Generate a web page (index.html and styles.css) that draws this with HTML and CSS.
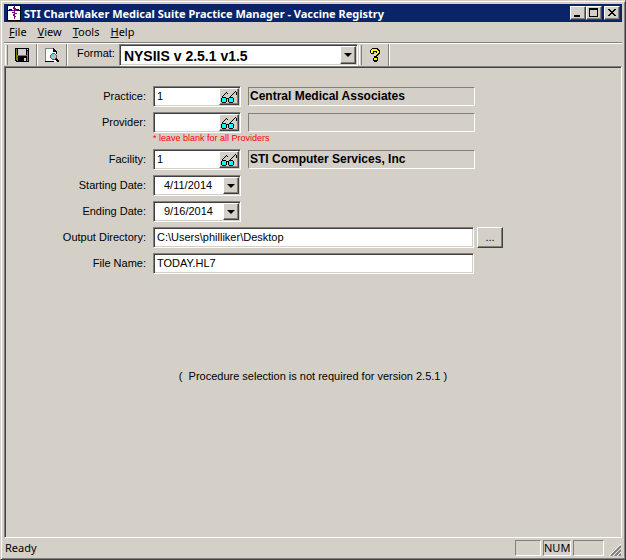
FILE: index.html
```html
<!DOCTYPE html>
<html lang="en">
<head>
    <meta charset="UTF-8">
    <meta name="viewport" content="width=device-width, initial-scale=1.0">
    <title>Vaccine Registry</title>
    <link rel="stylesheet" href="styles.css">
</head>
<body>
    <div class="window">
        <header class="title-bar">
            <svg class="app-icon" viewBox="0 0 14 16" shape-rendering="crispEdges">
                <rect width="14" height="16" fill="#000"/>
                <rect x="1" y="1" width="12" height="14" fill="#fff"/>
                <path d="M2 4h3v1h-3zM9 4h3v1h-3zM1 5h12v1h-12z" fill="#000080"/>
                <path d="M7 1h1v13h-1zM6 2h1v2h-1zM8 3h1v2h-1zM5 7h2v1h-2zM8 8h2v1h-2zM6 9h1v2h-1zM8 11h1v1h-1zM5 5h5v1h-5z" fill="#800080"/>
            </svg>
            <h1>STI ChartMaker Medical Suite Practice Manager - Vaccine Registry</h1>
            <div class="window-buttons">
                <button type="button" class="raised" aria-label="Minimize">
                    <svg viewBox="0 0 12 10" shape-rendering="crispEdges"><path d="M2 7h6v2h-6z"/></svg>
                </button>
                <button type="button" class="raised" aria-label="Maximize">
                    <svg viewBox="0 0 12 10" shape-rendering="crispEdges"><path d="M1 0h9v9h-9zM2 2v6h7v-6z" fill-rule="evenodd"/></svg>
                </button>
                <button type="button" class="raised close" aria-label="Close">
                    <svg viewBox="0 0 12 10" shape-rendering="crispEdges"><path d="M2 1h2v1h1v1h2v-1h1v-1h2v1h-1v1h-1v1h-1v1h1v1h1v1h1v1h-2v-1h-1v-1h-2v1h-1v1h-2v-1h1v-1h1v-1h1v-1h-1v-1h-1v-1h-1z"/></svg>
                </button>
            </div>
        </header>

        <nav class="menu-bar">
            <a href="#"><u>F</u>ile</a>
            <a href="#"><u>V</u>iew</a>
            <a href="#"><u>T</u>ools</a>
            <a href="#"><u>H</u>elp</a>
        </nav>

        <div class="toolbar">
            <span class="gripper"></span>
            <button type="button" class="tool" aria-label="Save">
                <svg width="14" height="14" viewBox="0 0 14 14" shape-rendering="crispEdges">
                    <path d="M0 0h14v14h-13l-1-1z" fill="#000"/>
                    <path d="M1 1h1v11h-1zM2 7h10v1h-10zM12 3h1v10h-1zM2 8h1v5h-1z" fill="#808000"/>
                    <path d="M3 1h8v6h-8zM12 1h1v1h-1zM9 10h2v3h-2z" fill="#d4d0c8"/>
                </svg>
            </button>
            <span class="divider"></span>
            <button type="button" class="tool" aria-label="Preview">
                <svg width="15" height="15" viewBox="0 0 15 15" shape-rendering="crispEdges">
                    <path d="M0 0h8l3 3v11h-11z" fill="#fff"/>
                    <path d="M0 0h8v1h-8zM0 0h1v14h-1z" fill="#808080"/>
                    <path d="M8 0h1v1h1v1h1v1h1v3h-1v-2h-3zM0 13h9v1h-9z" fill="#000"/>
                    <path d="M7 5h3v1h1v1h1v3h-1v1h-1v1h-3v-1h-1v-1h-1v-3h1v-1h1z" fill="#606060"/>
                    <path d="M7 6h3v1h1v3h-1v1h-3v-1h-1v-3h1z" fill="#c0c0c0"/>
                    <path d="M7 6h1v1h1v1h-2v1h-1v-2h1zM9 9h1v1h-1v1h-1v-1h1z" fill="#0ff"/>
                    <path d="M11 10h1v1h1v1h1v2h-2v-1h-1v-1h-1v-1h1z" fill="#000"/>
                </svg>
            </button>
            <span class="divider"></span>
            <label for="format">Format:</label>
            <div class="combo sunken">
                <select id="format">
                    <option>NYSIIS v 2.5.1 v1.5</option>
                </select>
                <span class="arrow raised"></span>
            </div>
            <span class="gripper"></span>
            <button type="button" class="tool help" aria-label="Help">
                <svg width="10" height="14" viewBox="0 0 10 14" shape-rendering="crispEdges">
                    <path d="M2 0h6v1h1v1h1v4h-1v1h-1v1h-1v1h1v4h-1v1h-3v-1h-1v-3h1v-3h1v-1h1v-2h-2v2h-3v-1h-1v-3h1v-1h1z" fill="#000"/>
                    <path d="M2 1h5v1h1v1h1v2h-1v1h-1v1h-1v1h-2v-1h1v-1h1v-1h1v-2h-4v2h-2v-3h1zM4 10h3v2h-3z" fill="#ff0"/>
                </svg>
            </button>
            <span class="divider"></span>
        </div>

        <main class="client">
            <form class="registry">
                <div class="row">
                    <label for="practice">Practice:</label>
                    <div class="field lookup sunken">
                        <input id="practice" type="text" value="1">
                        <button type="button" class="raised" aria-label="Find practice">
                            <svg width="16" height="12" viewBox="0 0 16 12"><use href="#glasses"/></svg>
                        </button>
                    </div>
                    <output class="name">Central Medical Associates</output>
                </div>
                <div class="row">
                    <label for="provider">Provider:</label>
                    <div class="provider">
                        <div class="field lookup sunken">
                            <input id="provider" type="text">
                            <button type="button" class="raised" aria-label="Find provider">
                                <svg width="16" height="12" viewBox="0 0 16 12"><use href="#glasses"/></svg>
                            </button>
                        </div>
                        <p class="note">* leave blank for all Providers</p>
                    </div>
                    <output class="name"></output>
                </div>
                <div class="row">
                    <label for="facility">Facility:</label>
                    <div class="field lookup sunken">
                        <input id="facility" type="text" value="1">
                        <button type="button" class="raised" aria-label="Find facility">
                            <svg width="16" height="12" viewBox="0 0 16 12"><use href="#glasses"/></svg>
                        </button>
                    </div>
                    <output class="name">STI Computer Services, Inc</output>
                </div>
                <div class="row">
                    <label for="start">Starting Date:</label>
                    <div class="field date sunken">
                        <input id="start" type="text" value="4/11/2014">
                        <button type="button" class="arrow raised" aria-label="Pick starting date"></button>
                    </div>
                </div>
                <div class="row">
                    <label for="end">Ending Date:</label>
                    <div class="field date sunken">
                        <input id="end" type="text" value="9/16/2014">
                        <button type="button" class="arrow raised" aria-label="Pick ending date"></button>
                    </div>
                </div>
                <div class="row">
                    <label for="output-dir">Output Directory:</label>
                    <div class="field wide sunken">
                        <input id="output-dir" type="text" value="C:\Users\philliker\Desktop">
                    </div>
                    <button type="button" class="browse raised" aria-label="Browse">...</button>
                </div>
                <div class="row">
                    <label for="file-name">File Name:</label>
                    <div class="field wide sunken">
                        <input id="file-name" type="text" value="TODAY.HL7">
                    </div>
                </div>
            </form>
            <p class="message">(&nbsp; Procedure selection is not required for version 2.5.1 )</p>
        </main>

        <footer class="status-bar">
            <span class="status-text">Ready</span>
            <span class="pane"></span>
            <span class="pane num">NUM</span>
            <span class="pane last"></span>
            <svg class="grip" width="12" height="12" viewBox="0 0 12 12">
                <path d="M0 12L12 0M4 12L12 4M8 12L12 8" stroke="#fff"/>
                <path d="M2 12L12 2M6 12L12 6M10 12L12 10" stroke="#808080" stroke-width="2"/>
            </svg>
        </footer>
    </div>

    <svg class="symbols" aria-hidden="true">
        <symbol id="glasses" viewBox="0 0 16 12">
            <g shape-rendering="crispEdges">
                <path d="M1 6h4v1h1v4h-1v1h-4v-1h-1v-4h1zM8 6h4v1h1v4h-1v1h-4v-1h-1v-4h1zM6 7h1v1h-1zM1 5h1v1h-1zM2 4h1v1h-1zM3 3h1v1h-1zM4 2h1v1h-1zM5 1h1v1h-1zM6 2h1v1h-1zM9 5h1v1h-1zM10 4h1v1h-1zM11 3h1v1h-1zM12 2h1v1h-1zM13 1h1v1h-1zM14 0h1v1h-1zM15 1h1v3h-1z"/>
                <path d="M1 7h4v4h-4zM8 7h4v4h-4z" fill="#0ff"/>
            </g>
        </symbol>
    </svg>
</body>
</html>
```
FILE: styles.css
```css
* {
    box-sizing: border-box;
}

body {
    margin: 0;
    background: #d4d0c8;
    color: #000;
    font-family: "Liberation Sans", Arial, sans-serif;
    font-size: 11px;
    line-height: 13px;
}

button, input, select {
    font: inherit;
    color: inherit;
    margin: 0;
    padding: 0;
    border: 0;
    border-radius: 0;
    background: none;
    outline: none;
}

svg {
    display: block;
}

.symbols {
    display: none;
}

/* Bevels */
.raised {
    background: #d4d0c8;
    border: 1px solid;
    border-color: #fff #404040 #404040 #fff;
    box-shadow: inset -1px -1px #808080;
}

.sunken {
    background: #fff;
    border: 1px solid;
    border-color: #808080 #fff #fff #808080;
    box-shadow: inset 1px 1px #404040, inset -1px -1px #d4d0c8;
}

.window {
    display: flex;
    flex-direction: column;
    min-height: 100vh;
    padding: 2px;
    border: 1px solid;
    border-color: #d4d0c8 #404040 #404040 #d4d0c8;
    box-shadow: inset 1px 1px #fff, inset -1px -1px #808080;
}

/* Title bar */
.title-bar {
    display: flex;
    align-items: center;
    height: 18px;
    margin: 1px 1px 0;
    padding: 0 2px 0 3px;
    background: #0a246a;
    color: #fff;
}

.app-icon {
    width: 14px;
    height: 16px;
}

.title-bar h1 {
    flex: 1;
    margin: 0 0 0 3px;
    font-family: "Noto Sans", sans-serif;
    font-size: 11px;
    font-weight: bold;
    white-space: nowrap;
}

.window-buttons {
    display: flex;
}

.window-buttons button {
    width: 16px;
    height: 14px;
    padding: 1px;
}

.window-buttons svg {
    width: 12px;
    height: 10px;
}

.window-buttons .close {
    margin-left: 2px;
}

/* Menu */
.menu-bar {
    display: flex;
    gap: 11px;
    height: 21px;
    margin: 0 1px;
    padding: 3px 5px;
    border-bottom: 1px solid #808080;
    font-family: "Noto Sans", sans-serif;
}

.menu-bar a {
    color: #000;
    text-decoration: none;
}

/* Toolbar */
.toolbar {
    display: flex;
    height: 23px;
    margin: 0 1px;
    border-top: 1px solid #fff;
}

.gripper {
    width: 3px;
    margin: 1px 0 1px 1px;
    border-left: 1px solid #fff;
    border-right: 1px solid #808080;
}

.divider {
    width: 2px;
    border-left: 1px solid #808080;
    border-right: 1px solid #fff;
}

.tool {
    display: flex;
    align-items: center;
    justify-content: center;
    width: 28px;
}

.toolbar label {
    padding: 3px 4px 0 9px;
}

.combo {
    display: flex;
    width: 239px;
    padding: 1px;
}

.combo select {
    flex: 1;
    min-width: 0;
    padding: 2px 3px 0;
    appearance: none;
    font-size: 14px;
    font-weight: bold;
}

.arrow {
    display: flex;
    align-items: center;
    justify-content: center;
    width: 16px;
}

.arrow::before {
    content: "";
    border: 4px solid transparent;
    border-top-color: #000;
    border-bottom: 0;
}

.tool.help {
    width: 26px;
}

/* Client area */
.client {
    flex: 1;
    margin: 0 1px;
    border: 1px solid;
    border-color: #808080 #fff #fff #808080;
    box-shadow: inset 1px 1px #404040;
}

.registry {
    display: flex;
    flex-direction: column;
    gap: 5px;
    padding-top: 19px;
}

.row {
    display: flex;
    align-items: flex-start;
}

.row label {
    width: 141px;
    margin-right: 7px;
    padding-top: 4px;
    text-align: right;
}

.field {
    display: flex;
    width: 88px;
    height: 21px;
    padding: 1px;
}

.field input {
    flex: 1;
    min-width: 0;
    padding: 0 2px 1px;
}

.field.wide {
    width: 321px;
}

.lookup button {
    width: 20px;
    padding: 1px;
}

.date input {
    padding-left: 9px;
}

.provider {
    width: 88px;
}

.note {
    height: 11px;
    margin: 0;
    color: #f00;
    font-size: 9px;
    line-height: 11px;
    white-space: nowrap;
}

.name {
    width: 227px;
    height: 19px;
    margin: 1px 0 0 7px;
    padding: 2px 1px;
    border: 1px solid;
    border-color: #808080 #fff #fff #808080;
    font-size: 12px;
    font-weight: bold;
}

.browse {
    width: 26px;
    height: 21px;
    margin-left: 3px;
}

.message {
    margin: 96px 0 0;
    text-align: center;
}

/* Status bar */
.status-bar {
    display: flex;
    gap: 2px;
    height: 19px;
    padding: 2px 2px 1px;
    font-family: "Noto Sans", sans-serif;
}

.status-text {
    flex: 1;
    padding-top: 1px;
}

.pane {
    width: 26px;
    border: 1px solid;
    border-color: #808080 #fff #fff #808080;
}

.num {
    width: 28px;
    text-align: center;
}

.last {
    width: 31px;
}

.grip {
    align-self: flex-end;
    margin-left: 3px;
}
```
